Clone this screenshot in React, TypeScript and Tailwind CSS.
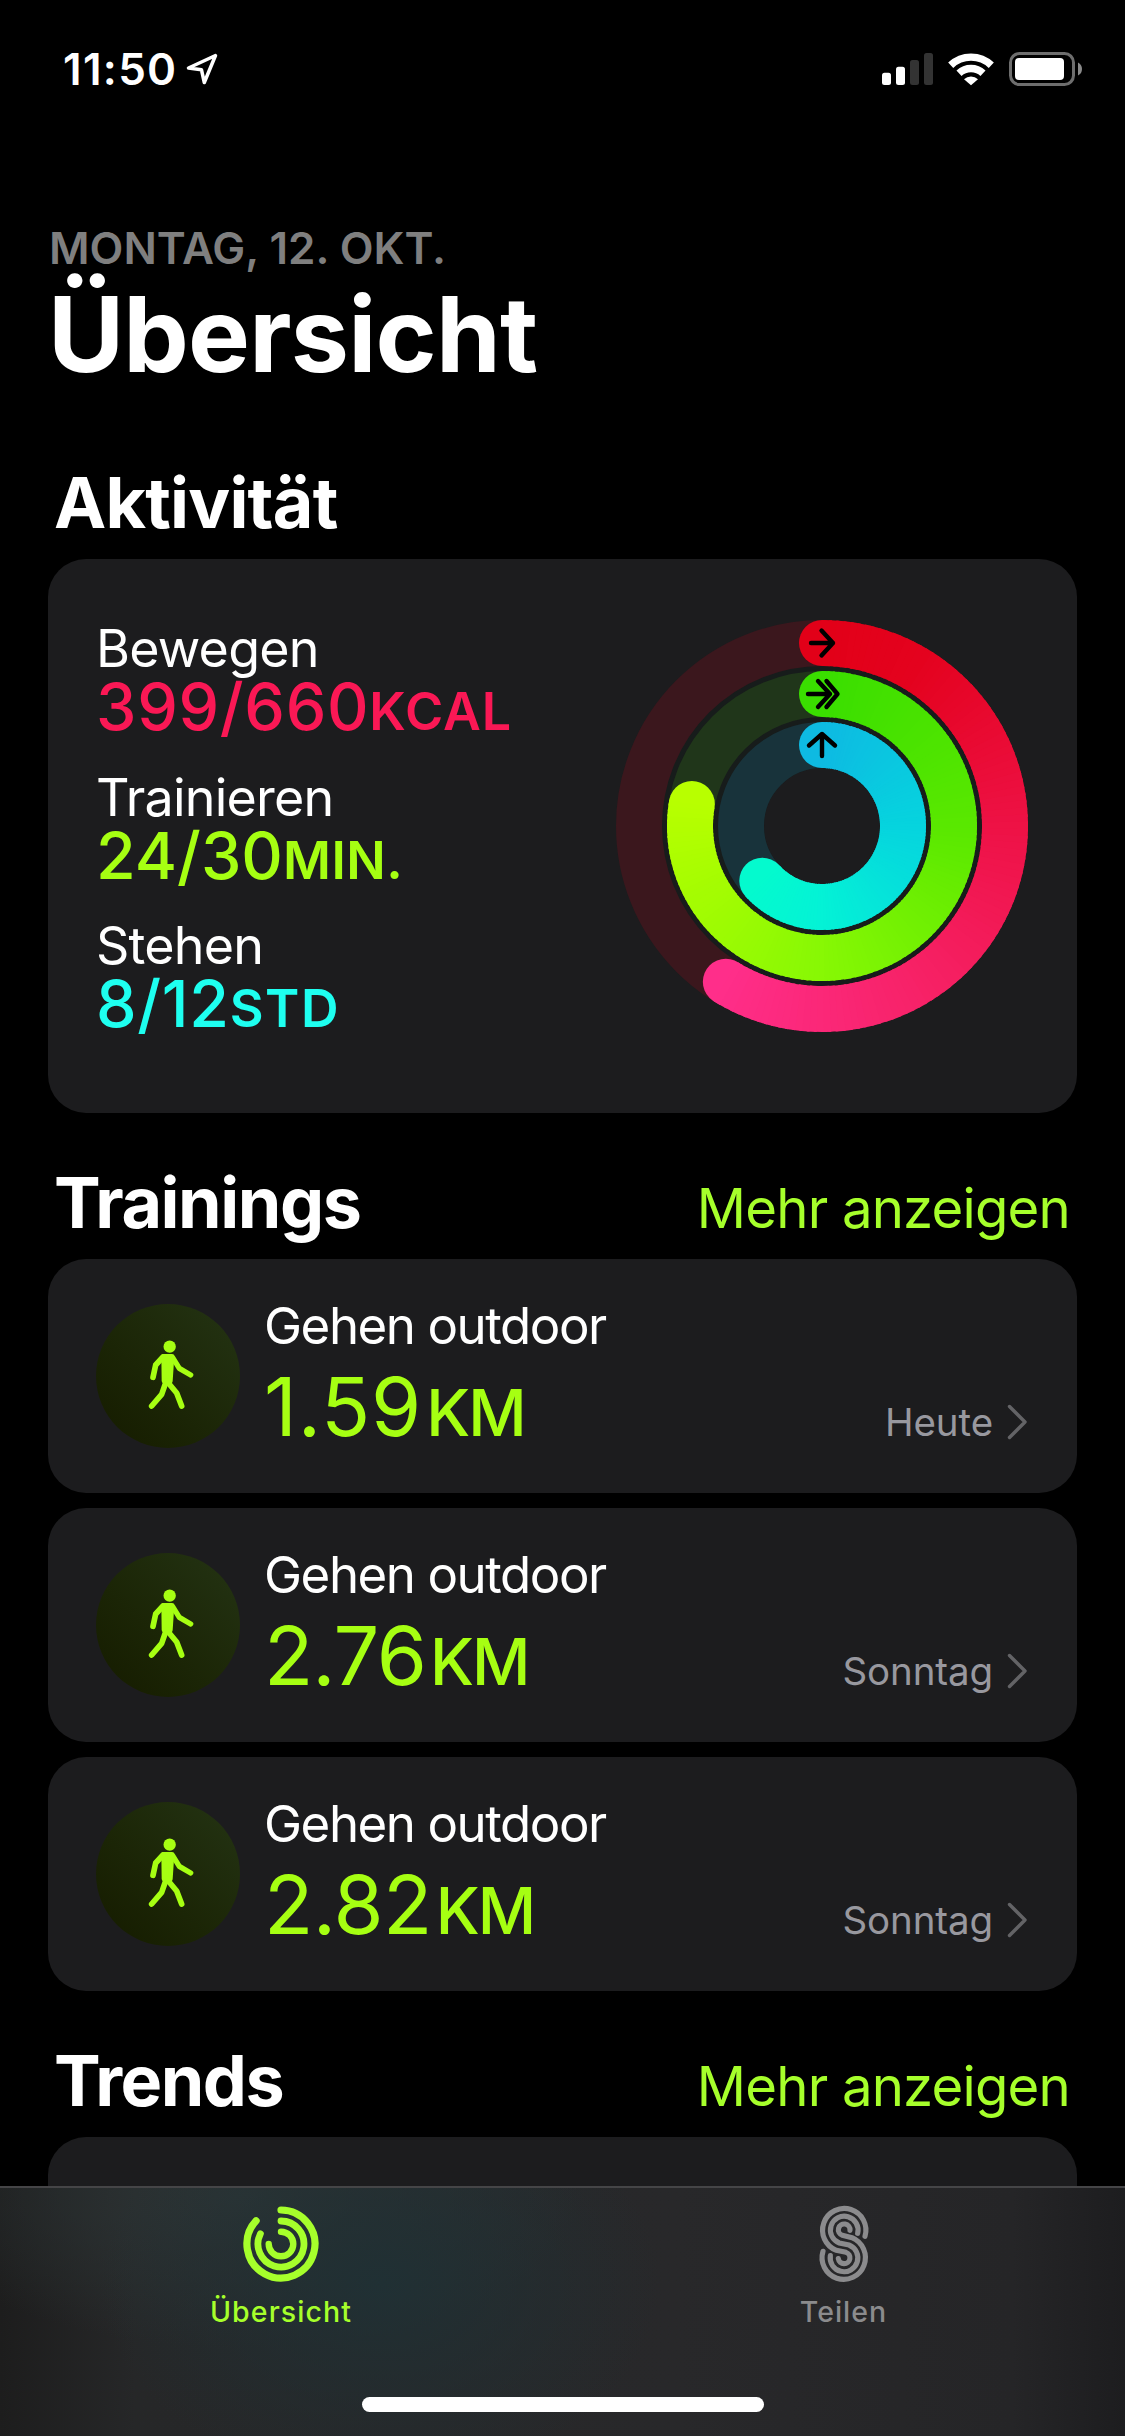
import React from 'react';

interface RingProps {
  radius: number;
  sweep: number;
  track: string;
  stops: number[][];
}

interface ActivityStatProps {
  label: string;
  value: string;
  unit: string;
  className: string;
  unitClassName: string;
}

interface SectionHeaderProps {
  title: string;
  titleClassName: string;
  link?: string;
}

interface WorkoutCardProps {
  name: string;
  distance: string;
  day: string;
  distanceClassName: string;
}

const RING_CENTER = 206;
const RING_WIDTH = 46;

const pointAt = (radius: number, deg: number) => {
  const rad = (deg * Math.PI) / 180;
  return [RING_CENTER + radius * Math.sin(rad), RING_CENTER - radius * Math.cos(rad)];
};

// Each stop is [angle, r, g, b]
const colorAt = (stops: number[][], deg: number) => {
  let i = 0;
  while (i < stops.length - 2 && deg > stops[i + 1][0]) i++;
  const a = stops[i];
  const b = stops[i + 1];
  const t = Math.min(1, Math.max(0, (deg - a[0]) / (b[0] - a[0])));
  const mix = [1, 2, 3].map((c) => Math.round(a[c] + (b[c] - a[c]) * t));
  return `rgb(${mix.join(',')})`;
};

const Ring: React.FC<RingProps> = ({ radius, sweep, track, stops }) => {
  const [endX, endY] = pointAt(radius, sweep);
  const steps = Math.floor(sweep / 2);
  return (
    <g fill="none" strokeWidth={RING_WIDTH}>
      <circle cx={RING_CENTER} cy={RING_CENTER} r={radius} stroke={track} />
      <circle cx={endX} cy={endY} r={RING_WIDTH / 2} fill={colorAt(stops, sweep)} />
      <circle cx={RING_CENTER} cy={RING_CENTER - radius} r={RING_WIDTH / 2} fill={colorAt(stops, 0)} />
      {Array.from({ length: steps }, (_, i) => {
        const from = (i * sweep) / steps;
        const to = Math.min(sweep, ((i + 1) * sweep) / steps + 0.8);
        const [x1, y1] = pointAt(radius, from);
        const [x2, y2] = pointAt(radius, to);
        return (
          <path
            key={i}
            d={`M${x1} ${y1}A${radius} ${radius} 0 0 1 ${x2} ${y2}`}
            stroke={colorAt(stops, from)}
          />
        );
      })}
    </g>
  );
};

const ActivityRings: React.FC = () => (
  <svg className="w-[412px] h-[412px]" viewBox="0 0 412 412">
    <circle cx="206" cy="206" r="130" fill="none" stroke="#171c1b" strokeWidth="144" />
    <Ring
      radius={183}
      sweep={211.7}
      track="#3b171d"
      stops={[[0, 226, 0, 24], [30, 228, 2, 30], [90, 238, 18, 70], [150, 247, 34, 104], [212, 255, 46, 138]]}
    />
    <Ring
      radius={132}
      sweep={279.6}
      track="#20361a"
      stops={[[0, 58, 222, 0], [90, 90, 232, 0], [180, 136, 248, 4], [280, 184, 255, 0]]}
    />
    <Ring
      radius={81}
      sweep={227.5}
      track="#18333b"
      stops={[[0, 14, 186, 226], [90, 6, 212, 222], [180, 4, 242, 214], [228, 4, 250, 206]]}
    />
    <g fill="none" stroke="#000" strokeWidth="4.4" strokeLinecap="round" strokeLinejoin="round">
      <path d="M195 23H217M205.5 10.500L217 23L205.500 35.500" />
      <path d="M192 74H214M202 61L214 74L202 87M210.500 61L221.500 74L210.500 87" />
      <path d="M206 136V114M193 125.500L206 114L219 125.500" />
    </g>
  </svg>
);

const ActivityStat: React.FC<ActivityStatProps> = ({ label, value, unit, className, unitClassName }) => (
  <div>
    <div className="text-[52px] leading-[58px] tracking-[-0.8px] text-white">{label}</div>
    <div className={`text-[64.500px] leading-[58.500px] font-medium whitespace-nowrap ${className}`}>
      {value}
      <span className={`text-[52px] leading-[0px] font-semibold ${unitClassName}`}>{unit}</span>
    </div>
  </div>
);

const SectionHeader: React.FC<SectionHeaderProps> = ({ title, titleClassName, link }) => (
  <div className="h-[146px] pt-[49.500px] pl-1.5 pr-[7px] flex justify-between items-baseline">
    <h2 className={`text-[70px] leading-[80px] font-bold text-white ${titleClassName}`}>{title}</h2>
    {link && <a className="text-[54.500px] leading-[80px] tracking-[-0.8px] text-[#a6ff2b]">{link}</a>}
  </div>
);

const WalkIcon: React.FC = () => (
  <svg className="w-36 h-36" viewBox="18 27 432 432">
    <g fill="none" stroke="#a6ff12" strokeLinecap="round" strokeLinejoin="round">
      <circle cx="239" cy="155" r="18.500" fill="#a6ff12" stroke="none" />
      <path d="M221 184L246 184L241 258L222 258Z" fill="#a6ff12" strokeWidth="14" />
      <path d="M219 186L197 210L189 247" strokeWidth="17" />
      <path d="M248 188L268 220L302 240" strokeWidth="16" />
      <path d="M229 258L215 298L185 333" strokeWidth="17" />
      <path d="M235 264L260 294L275 333" strokeWidth="17" />
    </g>
  </svg>
);

const WorkoutCard: React.FC<WorkoutCardProps> = ({ name, distance, day, distanceClassName }) => (
  <div className="h-[234px] rounded-[38px] bg-[#1c1c1e] flex pl-12 pr-[50px]">
    <div className="self-center w-36 h-36 rounded-full bg-linear-to-tr from-[#151b00] to-[#243414]">
      <WalkIcon />
    </div>
    <div className="pl-6 pt-[37px]">
      <div className="text-[51px] leading-[60px] tracking-[-1.450px] text-white">{name}</div>
      <div className={`mt-[11px] text-[81px] leading-[80px] text-[#a6ff12] whitespace-nowrap ${distanceClassName}`}>
        {distance}
        <span className="ml-1 text-[64px] leading-[0px] font-medium tracking-[-2px]">KM</span>
      </div>
    </div>
    <div className="ml-auto mt-[143px] h-10 flex items-center">
      <span className="text-[38.500px] leading-10 tracking-[-0.100px] text-[#98989f]">{day}</span>
      <svg className="ml-3.5 w-5 h-9" viewBox="0 0 20 36" fill="none" stroke="#636366" strokeWidth="3.400" strokeLinecap="round" strokeLinejoin="round">
        <path d="M2.500 2.500L18 18L2.500 33.500" />
      </svg>
    </div>
  </div>
);

const StatusBar: React.FC = () => (
  <div className="h-[138px] shrink-0 pl-[63px] pr-[42px] flex items-center text-white">
    <span className="text-[44px] leading-[54px] font-semibold tracking-[1.300px]">11:50</span>
    <svg className="ml-2 w-[34px] h-[34px]" viewBox="185 52 34 34" fill="none" stroke="#fff" strokeWidth="3.500" strokeLinejoin="round">
      <path d="M215.500 55.500L188.500 68L201.500 69.800L204.300 82.500Z" />
    </svg>
    <svg className="ml-auto w-[202px] h-10" viewBox="881 49 202 40">
      {/* Signal */}
      <rect x="882" y="72.700" width="9" height="12.300" rx="2.500" fill="#fff" />
      <rect x="896" y="66.700" width="9" height="18.300" rx="2.500" fill="#fff" />
      <rect x="910" y="60" width="9" height="25" rx="2.500" fill="#333" />
      <rect x="924" y="53" width="9" height="32" rx="2.500" fill="#333" />
      {/* Wifi */}
      <g fill="none" stroke="#fff" strokeWidth="7.400">
        <path d="M950.700 65.200A29.500 29.500 0 0 1 991.300 65.200" />
        <path d="M959 73.200A17.500 17.500 0 0 1 983 73.200" />
      </g>
      <path d="M964 79.300A10.300 10.300 0 0 1 978 79.300L971 85.300Z" fill="#fff" />
      {/* Battery */}
      <rect x="1010.500" y="53.500" width="63" height="31" rx="9" fill="none" stroke="#6e6e6e" strokeWidth="3" />
      <rect x="1015" y="58" width="49" height="22" rx="4" fill="#fff" />
      <path d="M1078 62.500Q1082 64.500 1082 69T1078 75.500Z" fill="#8a8a8a" />
    </svg>
  </div>
);

const RingsTabIcon: React.FC = () => (
  <svg className="w-20 h-20" viewBox="-40 -40 80 80" fill="none" stroke="#a6ff2b" strokeLinecap="round">
    <path d="M0 -34A34 34 0 1 1 -24.900 -23.200" strokeWidth="7.200" />
    <path d="M0 -23A23 23 0 1 1 -20.600 -10.300" strokeWidth="6.800" />
    <path d="M0 -12.300A12.300 12.300 0 1 1 -12.300 0" strokeWidth="6.400" />
  </svg>
);

const ShareTabIcon: React.FC = () => (
  <svg className="w-20 h-20" viewBox="42 42 240 240" fill="none" stroke="#8b8b8d" strokeWidth="15.500" strokeLinecap="round">
    <path d="M225 139A65 65 0 1 0 139 181L168 187A17.500 17.500 0 1 1 145 206" />
    <path d="M203 130A41.500 41.500 0 1 0 148 159L177 165A41.500 41.500 0 1 1 121 197" />
    <path d="M180 121A17.500 17.500 0 1 0 157 136L186 143A65 65 0 1 1 99 184" />
  </svg>
);

const TabBar: React.FC = () => (
  <div className="absolute inset-x-0 bottom-0 h-[250px] border-t-2 border-[#454547] bg-[#262628] bg-[radial-gradient(ellipse_280px_200px_at_380px_95px,#203034_0%,transparent_100%),radial-gradient(ellipse_340px_150px_at_240px_10px,#2c3435_0%,transparent_100%),linear-gradient(90deg,#1d1d1d_0%,#262728_12%,#28282a_60%,#252527_90%,#1d1d1f_100%)] flex flex-col">
    <div className="flex">
      <div className="w-[562px] pt-[16px] flex flex-col items-center">
        <RingsTabIcon />
        <span className="mt-[8px] text-[28.500px] leading-10 font-medium tracking-[1.100px] text-[#a6ff2b]">Übersicht</span>
      </div>
      <div className="w-[563px] pt-[16px] flex flex-col items-center">
        <ShareTabIcon />
        <span className="mt-[8px] text-[28.500px] leading-10 font-medium tracking-[1px] text-[#8b8b8d]">Teilen</span>
      </div>
    </div>
    <div className="mt-auto mb-6 mx-auto w-[402px] h-[15px] rounded-full bg-white"></div>
  </div>
);

const App: React.FC = () => {
  return (
    <div className="relative w-[1125px] h-[2436px] overflow-hidden bg-black font-['Inter',sans-serif] flex flex-col">
      <StatusBar />

      <div className="px-12 flex flex-col">
        <div className="mt-[88px] pl-px text-[44px] leading-[44px] font-semibold tracking-[0px] text-[#7f7f7f]">MONTAG, 12. OKT.</div>
        <h1 className="mt-[10px] mb-[25px] text-[104px] leading-[108px] font-bold tracking-[-0.8px] text-white">Übersicht</h1>

        <SectionHeader title="Aktivität" titleClassName="tracking-[-0.8px]" />
        <div className="h-[554px] rounded-[38px] bg-[#1c1c1e] pl-12 pr-[49px] pt-[61px] flex justify-between">
          <div className="flex flex-col gap-8">
            <ActivityStat label="Bewegen" value="399/660" unit="KCAL" className="text-[#fa1855] tracking-[0.7px]" unitClassName="tracking-[1px]" />
            <ActivityStat label="Trainieren" value="24/30" unit="MIN." className="text-[#a6ff12] tracking-[0px]" unitClassName="tracking-[0.500px]" />
            <ActivityStat label="Stehen" value="8/12" unit="STD" className="text-[#1efff0] tracking-[0.700px]" unitClassName="tracking-[1.500px]" />
          </div>
          <ActivityRings />
        </div>

        <SectionHeader title="Trainings" titleClassName="tracking-[-1.450px]" link="Mehr anzeigen" />
        <div className="flex flex-col gap-[15px]">
          <WorkoutCard name="Gehen outdoor" distance="1.59" day="Heute" distanceClassName="tracking-[0.900px]" />
          <WorkoutCard name="Gehen outdoor" distance="2.76" day="Sonntag" distanceClassName="tracking-[-1.100px]" />
          <WorkoutCard name="Gehen outdoor" distance="2.82" day="Sonntag" distanceClassName="tracking-[-0.700px]" />
        </div>

        <SectionHeader title="Trends" titleClassName="tracking-[-1.500px]" link="Mehr anzeigen" />
        <div className="h-[234px] rounded-[38px] bg-[#1c1c1e]"></div>
      </div>

      <TabBar />
    </div>
  );
};

export default App;
